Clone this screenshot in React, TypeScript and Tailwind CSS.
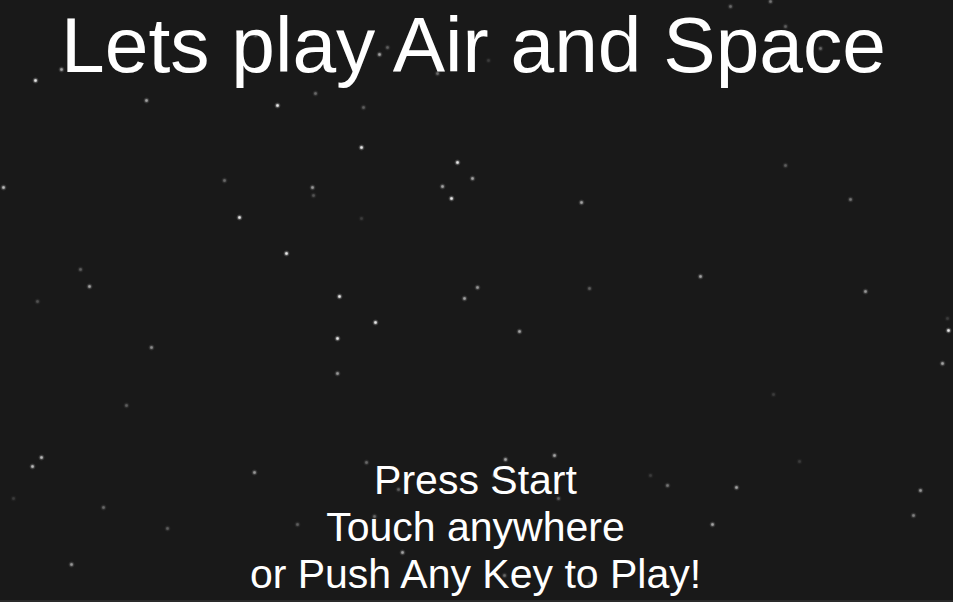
import React from "react";

type Star = [number, number, number];

// x, y, brightness
const STARS: Star[] = [
  [35, 80, 0.9], [61, 69, 0.6], [146, 100, 0.6], [277, 105, 0.9], [315, 93, 0.35],
  [363, 107, 0.3], [379, 54, 0.6], [387, 47, 0.3], [437, 73, 0.35], [255, 35, 0.3],
  [730, 6, 0.35], [770, 1, 0.4], [785, 26, 0.3], [820, 48, 0.35], [488, 60, 0.15],
  [361, 147, 0.9], [457, 162, 0.9], [472, 178, 0.6], [442, 186, 0.6], [451, 198, 0.9],
  [3, 187, 0.7], [224, 180, 0.35], [312, 187, 0.55], [313, 195, 0.25], [239, 217, 0.9],
  [361, 218, 0.15], [286, 253, 0.9], [80, 269, 0.3], [89, 286, 0.6], [37, 301, 0.25],
  [339, 296, 0.9], [477, 287, 0.55], [464, 298, 0.6], [375, 322, 0.9], [337, 338, 0.9],
  [151, 347, 0.5], [581, 202, 0.6], [785, 165, 0.3], [850, 199, 0.4], [700, 276, 0.6],
  [589, 288, 0.3], [865, 291, 0.55], [519, 331, 0.6], [948, 330, 0.9], [947, 318, 0.15],
  [337, 373, 0.55], [126, 405, 0.3], [41, 457, 0.7], [32, 466, 0.7], [254, 472, 0.55],
  [366, 462, 0.35], [398, 489, 0.3], [103, 507, 0.35], [167, 528, 0.3], [297, 524, 0.3],
  [374, 516, 0.35], [402, 552, 0.6], [71, 564, 0.55], [13, 498, 0.15], [942, 363, 0.6],
  [773, 394, 0.15], [505, 459, 0.6], [554, 455, 0.6], [494, 475, 0.5], [558, 498, 0.3],
  [667, 485, 0.4], [736, 487, 0.6], [799, 461, 0.15], [920, 490, 0.55], [913, 515, 0.45],
  [712, 524, 0.6], [650, 475, 0.15], [504, 575, 0.35], [589, 583, 0.35],
];

function Starfield() {
  return (
    <svg
      className="absolute inset-0 h-full w-full"
      width={953}
      height={600}
      viewBox="0 0 953 600"
      aria-hidden="true"
    >
      <defs>
        <radialGradient id="glow">
          <stop offset="0%" stopColor="#ffffff" stopOpacity="1" />
          <stop offset="30%" stopColor="#ffffff" stopOpacity="0.85" />
          <stop offset="60%" stopColor="#ffffff" stopOpacity="0.25" />
          <stop offset="100%" stopColor="#ffffff" stopOpacity="0" />
        </radialGradient>
      </defs>
      {STARS.map(([x, y, b], i) => (
        <circle key={i} cx={x + 0.5} cy={y + 0.5} r={3.4} fill="url(#glow)" opacity={b} />
      ))}
    </svg>
  );
}

export default function App() {
  return (
    <div className="w-[953px] h-[602px] bg-[#2a2a2a] overflow-hidden">
      <main
        className="relative flex h-[600px] flex-col justify-between bg-[#191919] text-white"
        style={{ fontFamily: '"Liberation Sans", Arial, sans-serif' }}
      >
        <Starfield />
        <h1 className="relative pr-[6px] text-center text-[78.5px] font-normal leading-[normal]">
          Lets play Air and Space
        </h1>
        <div className="relative pb-[2px] pr-[2px] text-center text-[41px] leading-[normal]">
          <p>Press Start</p>
          <p>Touch anywhere</p>
          <p>or Push Any Key to Play!</p>
        </div>
      </main>
    </div>
  );
}
